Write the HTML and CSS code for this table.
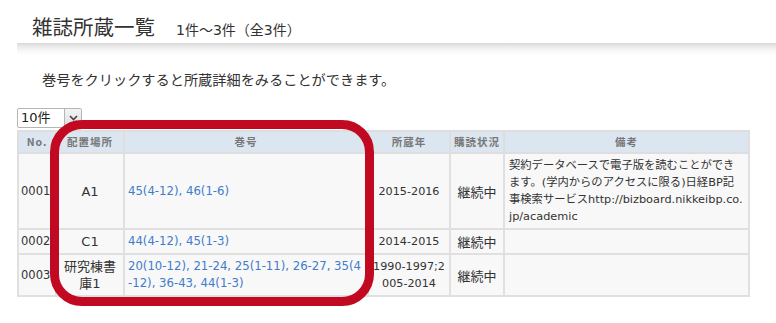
FILE: index.html
```html
<!DOCTYPE html>
<html lang="ja">
<head>
<meta charset="utf-8">
<link rel="stylesheet" href="styles.css">
</head>
<body>
<div class="page">
  <div class="header">
    <h1 class="title">雑誌所蔵一覧</h1>
    <span class="count">1件～3件（全3件）</span>
  </div>
  <div class="divider"></div>
  <p class="note">巻号をクリックすると所蔵詳細をみることができます。</p>
  <div class="select">
    <span class="select-value">10件</span>
    <span class="select-btn"><svg width="9" height="6" viewBox="0 0 9 6"><path d="M1 1 L4.5 4.5 L8 1" fill="none" stroke="#444" stroke-width="1.6"/></svg></span>
  </div>
  <table class="holdings">
    <colgroup>
      <col class="c-no"><col class="c-loc"><col class="c-vol"><col class="c-year"><col class="c-stat"><col class="c-memo">
    </colgroup>
    <thead>
      <tr><th>No.</th><th>配置場所</th><th>巻号</th><th>所蔵年</th><th>購読状況</th><th>備考</th></tr>
    </thead>
    <tbody>
      <tr class="r1">
        <td class="no">0001</td>
        <td class="ctr loc">A1</td>
        <td class="vol"><a href="#">45(4-12), 46(1-6)</a></td>
        <td class="ctr year">2015-2016</td>
        <td class="ctr stat">継続中</td>
        <td class="memo">契約データベースで電子版を読むことができ<br>ます。(学内からのアクセスに限る)日経BP記<br>事検索サービスhttp://bizboard.nikkeibp.co.<br>jp/academic</td>
      </tr>
      <tr>
        <td class="no">0002</td>
        <td class="ctr loc">C1</td>
        <td class="vol"><a href="#">44(4-12), 45(1-3)</a></td>
        <td class="ctr year">2014-2015</td>
        <td class="ctr stat">継続中</td>
        <td class="memo"></td>
      </tr>
      <tr>
        <td class="no">0003</td>
        <td class="ctr loc">研究棟書<br>庫1</td>
        <td class="vol"><a href="#">20(10-12), 21-24, 25(1-11), 26-27, 35(4<br>-12), 36-43, 44(1-3)</a></td>
        <td class="ctr year">1990-1997;2<br>005-2014</td>
        <td class="ctr stat">継続中</td>
        <td class="memo"></td>
      </tr>
    </tbody>
  </table>
  <div class="highlight"></div>
</div>
</body>
</html>
```
FILE: styles.css
```css
html, body {
  margin: 0;
  padding: 0;
  background: #fff;
}
body {
  font-family: "DejaVu Sans", "Noto Sans CJK JP", sans-serif;
  color: #333;
}
.page {
  position: relative;
  width: 776px;
  height: 323px;
  overflow: hidden;
}
.header {
  display: flex;
  align-items: baseline;
  padding: 12px 0 0 32px;
  height: 31px;
  box-sizing: border-box;
}
.title {
  margin: 0;
  font-family: "Noto Sans CJK JP", sans-serif;
  font-weight: normal;
  font-size: 20.5px;
  line-height: 28px;
  color: #333;
}
.count {
  margin-left: 21px;
  font-size: 14px;
  color: #333;
}
.divider {
  margin: 12px 0 0 17px;
  height: 12px;
  background: linear-gradient(#d8d8d8 0, #e8e8e8 3px, #f5f5f5 7px, #fff 12px);
}
.note {
  margin: 14px 0 0 42px;
  font-family: "Noto Sans CJK JP", sans-serif;
  font-size: 14.2px;
  line-height: 20px;
  color: #333;
}
.select {
  display: flex;
  margin: 19px 0 0 17px;
  width: 65px;
  height: 20px;
  box-sizing: border-box;
  border: 1px solid #b5b5b5;
  border-radius: 2px;
  background: #fff;
}
.select-value {
  flex: 1;
  font-size: 13px;
  line-height: 18px;
  padding-left: 3px;
  color: #222;
}
.select-btn {
  width: 16px;
  display: flex;
  align-items: center;
  justify-content: center;
  border-left: 1px solid #b5b5b5;
  background: linear-gradient(#f4f4f4, #dedede);
}
.holdings {
  margin: 2px 0 0 17px;
  width: 731px;
  table-layout: fixed;
  border-collapse: collapse;
  font-size: 11.5px;
  line-height: 17px;
  background: #f8f8f8;
}
.c-no { width: 38px; }
.c-loc { width: 68px; }
.c-vol { width: 244px; }
.c-year { width: 82px; }
.c-stat { width: 54px; }
.c-memo { width: 245px; }
.holdings th {
  background: #dce6f0;
  color: #777;
  font-family: "Noto Sans CJK JP", sans-serif;
  font-weight: bold;
  font-size: 10.5px;
  letter-spacing: 1px;
  line-height: 16px;
  padding: 2px 2px;
  border: 2px solid #dedede;
  text-align: center;
  height: 16px;
}
.holdings td {
  border: 2px solid #e0e0e0;
  padding: 3px 3px;
  vertical-align: middle;
  white-space: nowrap;
  color: #333;
}
.holdings td.no {
  padding: 3px 1px 3px 2px;
  font-size: 11.5px;
  overflow: hidden;
}
.holdings td.ctr {
  text-align: center;
}
.holdings td.loc {
  font-size: 13px;
}
.holdings td.year {
  font-size: 11.2px;
  overflow: hidden;
}
.holdings td.stat {
  font-family: "Noto Sans CJK JP", sans-serif;
  font-size: 13px;
}
.holdings td.vol {
  font-size: 11.7px;
}
.holdings td.memo {
  padding: 3px 3px 3px 4px;
  font-size: 11.3px;
}
.holdings a {
  color: #3e7ccc;
  text-decoration: none;
}
.highlight {
  position: absolute;
  left: 50px;
  top: 120px;
  width: 324px;
  height: 186px;
  box-sizing: border-box;
  border: 9px solid #c10a22;
  border-radius: 32px;
}
```
